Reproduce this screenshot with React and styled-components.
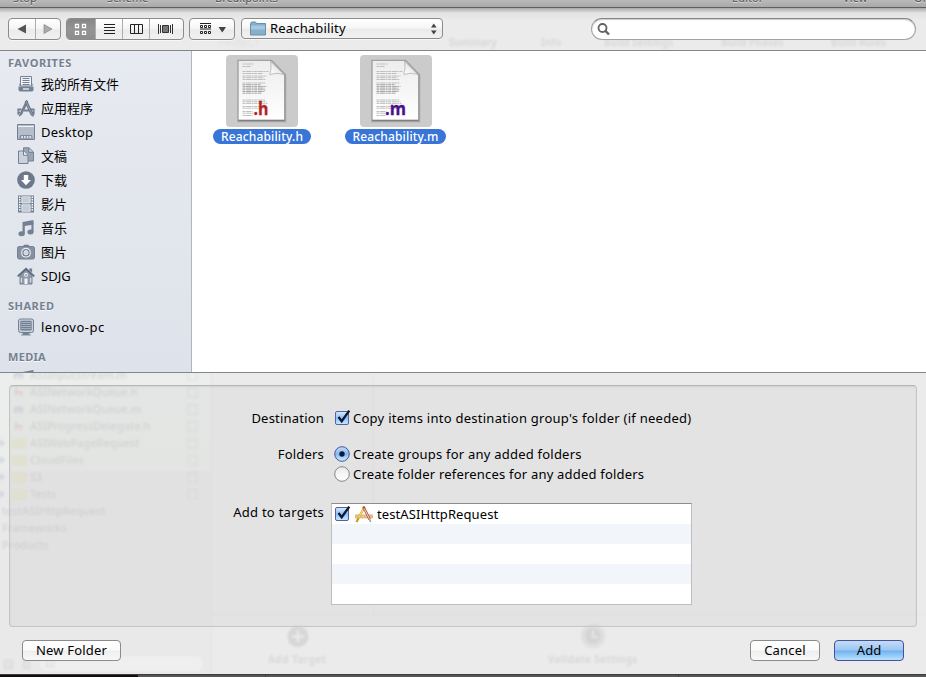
import React from "react";
import styled, { createGlobalStyle, css } from "styled-components";

const Global = createGlobalStyle`
  * { box-sizing: border-box; }
  body { margin: 0; overflow: hidden; }
`;

const Sheet = styled.div`
  position: relative;
  width: 926px;
  height: 677px;
  overflow: hidden;
  display: flex;
  flex-direction: column;
  background: #ebebeb;
  color: #000;
  font: 13px/20px "Noto Sans", "Noto Sans CJK SC", sans-serif;
  white-space: nowrap;
`;

const Text = styled.span`
  letter-spacing: ${(p) => p.$track || 0}px;
`;

/* ---------- Window behind the sheet ---------- */
const Behind = styled.div`
  position: absolute;
  inset: 0;
  overflow: hidden;
`;
const Tint = styled.div`
  position: absolute;
  left: 0;
  top: 373px;
  width: 211px;
  height: 301px;
  background: linear-gradient(#ebeeec 0, #ebedeb 96px, #e9e9e9 99px, #e9e9e9 100%);
`;
const Ghost = styled.div`
  position: absolute;
  left: ${(p) => p.$x}px;
  top: ${(p) => p.$y}px;
  font-size: ${(p) => p.$size || 11}px;
  font-weight: ${(p) => (p.$bold ? 700 : 500)};
  line-height: 16px;
  letter-spacing: ${(p) => p.$track || 0}px;
  color: rgba(60, 60, 60, ${(p) => p.$alpha || 0.13});
  filter: blur(0.9px);
`;
const GhostDrawing = styled.svg`
  position: absolute;
  inset: 0;
  filter: blur(1px);
`;

const WindowBar = styled.div`
  position: relative;
  flex: none;
  height: 8px;
  overflow: hidden;
  background: linear-gradient(#b9b9b9, #a9a9a9);
  border-bottom: 1px solid #5f5f5f;
`;
const BarLabel = styled.span`
  position: absolute;
  left: ${(p) => p.$x}px;
  top: -10px;
  font-size: 11px;
  line-height: 16px;
  letter-spacing: 0.1px;
  color: #555;
  text-shadow: 0 1px 0 #ddd;
`;

/* ---------- Toolbar ---------- */
const Toolbar = styled.div`
  position: relative;
  flex: none;
  display: flex;
  align-items: flex-start;
  height: 43px;
  padding: 10px 10px 0 8px;
  border-bottom: 1px solid #858585;
  background: linear-gradient(rgba(125, 125, 125, 0.6), rgba(215, 215, 215, 0.4) 5px, rgba(235, 235, 235, 0) 13px);
`;
const control = css`
  display: flex;
  height: 22px;
  border: 1px solid #8b8b8b;
  border-radius: 4px;
  background: linear-gradient(#fff, #f6f6f6 45%, #ebebeb 55%, #f1f1f1);
  box-shadow: 0 1px 0 rgba(255, 255, 255, 0.6);
`;
const Segments = styled.div`
  ${control}
  width: ${(p) => p.$w}px;
  margin-right: ${(p) => p.$gap}px;
  overflow: hidden;
`;
const Segment = styled.div`
  flex: ${(p) => (p.$w ? `0 0 ${p.$w}px` : "1")};
  display: flex;
  align-items: center;
  justify-content: center;
  background: ${(p) => (p.$on ? "linear-gradient(#858585, #949494 50%, #8d8d8d)" : "none")};
  & + & { border-left: 1px solid #adadad; }
`;
const FolderPopup = styled.div`
  ${control}
  width: 202px;
  height: 21px;
  align-items: center;
  padding: 0 5px 0 8px;
  gap: 4px;
  margin-right: 148px;
`;
const PopupName = styled(Text)`
  height: 20px;
  line-height: 18px;
`;
const Spacer = styled.div`
  flex: 1;
`;
const Search = styled.div`
  flex: 1;
  height: 22px;
  padding: 4px 5px;
  border: 1px solid #a3a3a3;
  border-top-color: #858585;
  border-radius: 11px;
  background: #fff;
  box-shadow: inset 0 1px 1px #ccc;
  svg { display: block; }
`;

/* ---------- Browser ---------- */
const Browser = styled.div`
  position: relative;
  flex: none;
  display: flex;
  height: 322px;
  border-bottom: 1px solid #858585;
  background: #fff;
`;
const Sidebar = styled.div`
  width: 192px;
  overflow: hidden;
  border-right: 1px solid #b3b5b8;
  background: linear-gradient(#e7eaf0, #dee2ea);
`;
const Heading = styled.div`
  height: 21px;
  margin-top: ${(p) => p.$gap || 0}px;
  padding: 2px 0 0 8px;
  font-size: 11px;
  font-weight: 700;
  letter-spacing: ${(p) => p.$track || 0}px;
  color: #76818f;
  text-shadow: 0 1px 0 #f5f7fa;
`;
const Place = styled.div`
  display: flex;
  align-items: center;
  gap: 6px;
  height: 24px;
  padding-left: 17px;
  svg { flex: none; }
`;
const Files = styled.div`
  display: flex;
  align-items: flex-start;
  gap: 34px;
  padding: 4px 0 0 21px;
`;
const File = styled.div`
  display: flex;
  flex-direction: column;
  align-items: center;
  gap: 2px;
`;
const Thumb = styled.div`
  width: 72px;
  height: 72px;
  border-radius: 4px;
  background: #cbcbcb;
`;
const FileName = styled.div`
  width: ${(p) => p.$w}px;
  height: 15px;
  border-radius: 8px;
  text-align: center;
  font-size: 12px;
  font-weight: 500;
  line-height: 15px;
  color: #fff;
  background: #3875d7;
  letter-spacing: ${(p) => p.$track}px;
`;

/* ---------- Options ---------- */
const Panel = styled.div`
  position: relative;
  flex: none;
  width: 908px;
  height: 242px;
  margin: 12px 0 0 9px;
  padding: 22px 0 0;
  border: 1px solid #c6c6c6;
  border-top-color: #b6b6b6;
  border-radius: 4px;
  background: rgba(190, 190, 190, 0.17);
  box-shadow: inset 0 1px 2px rgba(0, 0, 0, 0.08);
`;
const Field = styled.div`
  display: grid;
  grid-template-columns: 314px auto;
  margin-bottom: ${(p) => p.$after || 0}px;
`;
const FieldLabel = styled.div`
  text-align: right;
  line-height: ${(p) => p.$line || 20}px;
`;
const Choices = styled.div`
  padding-left: 10px;
`;
const Choice = styled.div`
  display: flex;
  align-items: center;
  height: 20px;
  gap: 1px;
  svg { flex: none; }
`;
const Targets = styled.div`
  width: 361px;
  height: 102px;
  margin-left: 7px;
  border: 1px solid #bebebe;
  border-top-color: #8e8e8e;
  background: #fff;
`;
const TargetRow = styled.div`
  display: flex;
  align-items: center;
  gap: 3px;
  height: 20px;
  padding-left: 2px;
  background: #fff;
  &:nth-child(even) { background: #f2f5fa; }
  svg { flex: none; }
`;
const TargetName = styled(Text)`
  margin-left: 1px;
`;

const Footer = styled.div`
  position: relative;
  flex: none;
  display: flex;
  align-items: flex-start;
  height: 47px;
  padding: 13px 22px 0;
`;
const Button = styled.button`
  width: ${(p) => p.$w}px;
  height: 21px;
  margin: 0 0 0 ${(p) => p.$gap || 0}px;
  padding: 0 0 1px;
  border: 1px solid ${(p) => (p.$primary ? "#4a4f9c" : "#8b8b8b")};
  border-radius: 4px;
  background: ${(p) =>
    p.$primary
      ? "linear-gradient(#c3dcf6, #9cc6f1 48%, #6fb2f0 52%, #b9e2fc)"
      : "linear-gradient(#fff, #fbfbfb 48%, #eeeeee 52%, #f8f8f8)"};
  font: inherit;
  line-height: 18px;
  letter-spacing: ${(p) => p.$track || 0}px;
  color: #000;
`;
const BottomEdge = styled.div`
  position: relative;
  flex: none;
  height: 3px;
  border-top: 1px solid #3c3c3c;
  background: linear-gradient(90deg, #100e0e 0 138px, #555 138px 265px, #444 265px 266px, #555 266px 678px, #444 678px 679px, #555 679px);
`;

/* ---------- Drawings ---------- */
const INK = "#748093";
const DARK = "#5f6b7c";
const placeDrawings = {
  all: (
    <>
      <path d="M3.500 1.500h11v9.500h-11z" fill="#f2f4f7" stroke={INK} />
      <path d="M5.500 3.500h7M5.500 5.500h7M5.500 7.500h7M5.500 9.500h7" stroke={INK} />
      <path d="M1.500 11.500h15v3.200q0 1.800-1.800 1.800H3.300q-1.800 0-1.800-1.800z" fill={INK} />
      <path d="M6 14h6" stroke="#f2f4f7" strokeWidth="1.300" />
      <path d="M2.500 10.500 3.500 8M15.500 10.500 14.500 8" stroke={INK} />
    </>
  ),
  apps: (
    <>
      <path d="M.5 10.500h4M13.500 10.500h4M.5 13.500h2.500M15 13.500h2.500M7 11.500h5" stroke={INK} strokeWidth="1.800" />
      <path d="M1.200 10v6M16.800 10v6" stroke={INK} strokeWidth="1.200" />
      <path d="M9.500 1.200 3 14.800l-.8 2.500 2.500-1.700L10.800 3z" fill={INK} stroke={DARK} strokeWidth=".6" />
      <path d="m8 3 1.700-1.600L16 15l.3 2.300-2.200-1.200z" fill="#8b96a5" stroke={DARK} strokeWidth=".8" />
    </>
  ),
  desktop: (
    <>
      <path d="M.5 1.500h17v15H.5z" fill="#b6bec9" stroke={INK} />
      <path d="M1 3.500h16" stroke="#eef1f5" />
      <path d="m2 15.500 1.500-3.500h11l1.500 3.500z" fill="#7e899a" />
      <path d="M4.200 14h1.800M7 14h1.600M9.800 14h1.600M12.400 14h1.800" stroke="#fff" strokeWidth="1.600" />
    </>
  ),
  docs: (
    <>
      <path d="M6.500 .8h5.500l4.500 4.200v9H6.500z" fill="#9aa5b3" stroke={INK} />
      <path d="M11.700 1v4.300H16" fill="#c4ccd6" stroke={INK} />
      <path d="M1.500 4h5.300l4.200 4v8.500H1.500z" fill="#ccd2db" stroke={INK} />
      <path d="M6.500 4v4.300H11" fill="#e9edf2" stroke={INK} />
    </>
  ),
  downloads: (
    <>
      <circle cx="9" cy="9" r="8.800" fill="#6d788a" />
      <path d="M6.800 4h4.400v5H14l-5 5.200L4 9h2.800z" fill="#fff" />
    </>
  ),
  movies: (
    <>
      <path d="M1 .5h16v17H1z" fill={INK} />
      <path d="M2.700 1.500v15M15.300 1.500v15" stroke="#fff" strokeWidth="1.500" strokeDasharray="1.500 1" />
      <path d="M4.800 1.800h8.400V8H4.800zM4.800 9.800h8.400v6.500H4.800z" fill="#c4ccd6" stroke="#eef1f5" strokeWidth=".8" />
    </>
  ),
  music: (
    <>
      <path d="M5.500 3 16.500 1v4.500L7.800 7v7.500H5.500z" fill={INK} />
      <path d="M14.400 3h2.100v10h-2.100z" fill={INK} />
      <ellipse cx="4.600" cy="14.700" rx="3.200" ry="2.500" fill={INK} />
      <ellipse cx="13.500" cy="13.100" rx="3.100" ry="2.500" fill={INK} />
    </>
  ),
  pictures: (
    <>
      <path d="M5.500 4 7 1.800h4.500L13 4z" fill={INK} />
      <rect x=".5" y="3.500" width="17" height="12.500" rx="1.800" fill="#8792a1" stroke={INK} />
      <circle cx="9" cy="9.700" r="4.900" fill="#eef1f5" />
      <circle cx="9" cy="9.700" r="3.800" fill={INK} />
      <circle cx="9" cy="9.700" r="2.100" fill="#c9d0d9" stroke="#eef1f5" />
    </>
  ),
  home: (
    <>
      <path d="M12.300 1.500h2.800v4l-2.800-2z" fill={INK} />
      <path d="M3 8.200 9 3l6 5.200V17H3z" fill="#909baa" stroke={INK} />
      <path d="m.7 9.300 8.300-7.500 8.300 7.500" fill="none" stroke={DARK} strokeWidth="1.800" />
      <path d="M4.300 11v4.500M13.700 11v4.500" stroke="#dde2e8" strokeWidth="1.200" />
      <path d="M7.500 11.500h3V17h-3z" fill="#f2f4f7" />
      <circle cx="9" cy="7.800" r="2" fill="#f2f4f7" />
      <circle cx="9" cy="7.800" r=".9" fill={INK} />
    </>
  ),
  computer: (
    <>
      <rect x="1.500" y="1" width="15" height="13.500" rx="2" fill="#cbd1da" stroke={INK} />
      <rect x="3.300" y="2.700" width="11.400" height="9.800" rx="1" fill={INK} />
      <path d="M4 4.500h10M4 6.500h10M4 8.500h10M4 10.500h10" stroke="#a4aebb" />
      <path d="M6.500 14.500h5l.8 2H5.700zM4 17h10" fill={INK} stroke={INK} strokeWidth=".8" />
    </>
  ),
};
const PlaceIcon = ({ kind }) => (
  <svg width="18" height="18" viewBox="0 0 18 18">{placeDrawings[kind]}</svg>
);

const textLines = [
  [6, 11], [8.5, 8], [13.5, 26], [15.5, 20], [18, 24], [19.700, 21], [21.500, 23],
  [25, 23], [26.700, 18], [28.400, 24], [30.100, 22], [31.800, 23], [33.500, 22], [35.200, 19],
  [42, 23], [43.700, 24], [45.400, 25], [48.500, 24], [50.200, 25], [53.500, 10], [55.200, 11], [57.500, 10],
];
const Document = ({ letter, color, id }) => (
  <svg width="72" height="72" viewBox="0 0 72 72">
    <defs>
      <linearGradient id={`page-${id}`} x2="0" y2="1">
        <stop stopColor="#ededed" />
        <stop offset="1" stopColor="#fff" />
      </linearGradient>
      <linearGradient id={`fold-${id}`} x1="0" y1="1" x2="1" y2="0">
        <stop stopColor="#fff" />
        <stop offset=".45" stopColor="#ececec" />
        <stop offset=".75" stopColor="#777" />
      </linearGradient>
    </defs>
    <path d="M12.500 6h33L59 20v46H12.500z" fill="none" stroke="#000" strokeOpacity=".2" strokeWidth="2.500" />
    <path d="M12.700 6h32.500L58 19.500v45.300H12.700z" fill={`url(#page-${id})`} />
    <path d="M12.500 65.300H58.500" stroke="#777" />
    {textLines.map(([y, w]) => (
      <path key={y} d={`M16.500 ${y + 3}h${w}`} stroke={y > 26 && y < 36 ? "#9c9c9c" : "#b8b8b8"} strokeWidth=".9" strokeDasharray="3 .6 5 .5 2 .6" />
    ))}
    <path d="M44.700 6q1 7.500-.8 13.500 7-2.500 14.100 0z" fill={`url(#fold-${id})`} stroke="#8a8a8a" strokeWidth=".5" />
    <text x={letter === "h" ? 27.500 : 25} y="60" fill={color} stroke={color} strokeWidth=".3" fontFamily="Open Sans, sans-serif" fontSize="18" fontWeight="700" textLength={letter === "h" ? 15 : 21} lengthAdjust="spacingAndGlyphs">
      .{letter}
    </text>
  </svg>
);

const Checkbox = ({ id }) => (
  <svg width="18" height="18" viewBox="0 0 18 18">
    <defs>
      <linearGradient id={id} x2="0" y2="1">
        <stop stopColor="#dcebfb" />
        <stop offset=".5" stopColor="#8fc0f2" />
        <stop offset="1" stopColor="#c7ecff" />
      </linearGradient>
    </defs>
    <rect x="1.500" y="2.500" width="13" height="13" rx="1.500" fill={`url(#${id})`} stroke="#56629f" />
    <path d="m4.500 8 3.200 4.200L15.300 1.600" fill="none" stroke="#0c1834" strokeWidth="2.300" />
  </svg>
);
const Radio = ({ on }) => (
  <svg width="18" height="18" viewBox="0 0 18 18">
    <defs>
      <linearGradient id={on ? "radio-on" : "radio-off"} x2="0" y2="1">
        <stop stopColor={on ? "#c8dcf7" : "#e9e9e9"} />
        <stop offset=".5" stopColor={on ? "#83b8f0" : "#f6f6f6"} />
        <stop offset="1" stopColor={on ? "#cdf1ff" : "#fff"} />
      </linearGradient>
    </defs>
    <circle cx="8" cy="9" r="7.300" fill={`url(#${on ? "radio-on" : "radio-off"})`} stroke={on ? "#4a569b" : "#868686"} />
    {on && <circle cx="8" cy="9" r="2.700" fill="#0c1834" />}
  </svg>
);
const AppIcon = () => (
  <svg width="18" height="18" viewBox="0 0 18 18">
    <path d="M.5 9.800h17v3.200H.5z" fill="#e8c08e" stroke="#d3a674" strokeWidth=".6" />
    <path d="M9.500 2 3.500 13l-2 4" fill="none" stroke="#c89c25" strokeWidth="2.200" />
    <path d="M9.500 2 3.500 13" stroke="#f6e05a" strokeWidth="1.300" />
    <path d="m8.300 1.500 6.400 13" stroke="#b6513c" strokeWidth="2.600" />
    <path d="m9.200 3.500 5.500 11" stroke="#eadfd8" strokeWidth="1" />
    <path d="m14.500 14.500 1.200 2.500" stroke="#999" strokeWidth="1.500" />
  </svg>
);

const favorites = [
  ["all", "我的所有文件", 0],
  ["apps", "应用程序", 0],
  ["desktop", "Desktop", 0.25],
  ["docs", "文稿", 0],
  ["downloads", "下载", 0],
  ["movies", "影片", 0],
  ["music", "音乐", 0],
  ["pictures", "图片", 0],
  ["home", "SDJG", 0],
];
const ghostFiles = [
  [30, "ASIInputStream.m", 0], [30, "ASINetworkQueue.h", 0], [30, "ASINetworkQueue.m", 0],
  [30, "ASIProgressDelegate.h", 0], [30, "ASIWebPageRequest", 0], [30, "CloudFiles", 0],
  [30, "S3", 0], [30, "Tests", 0], [2, "testASIHttpRequest", 0], [2, "Frameworks", 0], [2, "Products", 0],
];
const barLabels = [[13, "Stop"], [107, "Scheme"], [215, "Breakpoints"], [732, "Editor"], [843, "View"], [914, "Organizer"]];
const tabs = [[449, "Summary", 0.11], [541, "Info", 0.09], [604, "Build Settings", 0.1], [721, "Build Phases", 0.1], [831, "Build Rules", 0.1]];

const Backdrop = () => (
  <Behind>
    <Tint />
    {ghostFiles.map(([x, label, track], i) => (
      <Ghost key={label} $x={x} $y={367 + i * 17} $track={track}>{label}</Ghost>
    ))}
    {tabs.map(([x, label, alpha]) => (
      <Ghost key={label} $x={x} $y={34} $size={10} $bold $alpha={alpha}>{label}</Ghost>
    ))}
    <Ghost $x={219} $y={34} $size={10} $alpha={0.06}>PROJECT</Ghost>
    <Ghost $x={268} $y={651} $size={10} $bold $track={0.45} $alpha={0.1}>Add Target</Ghost>
    <Ghost $x={548} $y={651} $size={10} $bold $track={0.3} $alpha={0.1}>Validate Settings</Ghost>
    <GhostDrawing width="926" height="677">
      {[375, 392, 409, 426, 443, 460, 477, 494].map((y, i) => (
        <g key={y}>
          <rect x="188" y={y - 4} width="9" height="9" fill="none" stroke="#999" strokeOpacity=".17" />
          {i > 3 ? (
            <>
              <rect x="12" y={y - 5} width="15" height="11" fill="#e4e1b8" fillOpacity=".38" />
              <path d={`M0 ${y - 4}l5 4-5 4z`} fill="#8c98a8" fillOpacity=".25" />
            </>
          ) : (
            <path d={i % 2 ? `M16 ${y + 4}v-8M16 ${y}h5v4` : `M15 ${y + 4}v-5h7v5M18.500 ${y}v4`} stroke={i % 2 ? "#d88" : "#88b"} fill="none" strokeOpacity=".28" strokeWidth="1.800" />
          )}
        </g>
      ))}
      <path d="M211.500 373v301M211 614.500h715M373.500 374v240" stroke="#888" strokeOpacity=".07" />
      <circle cx="298" cy="636.500" r="10.500" fill="#888" fillOpacity=".2" />
      <path d="M292 636.500h12M298 630.500v12" stroke="#eaeaea" strokeWidth="2.500" />
      <circle cx="593" cy="636" r="12" fill="#888" fillOpacity=".12" />
      <circle cx="593" cy="636" r="8" fill="#888" fillOpacity=".12" />
      <path d="M593 630v7h5" stroke="#e6e6e6" strokeWidth="2" fill="none" />
      <rect x="40" y="656" width="163" height="15" rx="7" fill="#f5f5f5" fillOpacity=".5" />
      <path d="M4 660h9v9H4zM23 660h7v9h-7zM46 660h8v7h-8z" fill="#888" fillOpacity=".06" stroke="#888" strokeOpacity=".1" />
    </GhostDrawing>
  </Behind>
);

export default function App() {
  return (
    <Sheet>
      <Global />
      <Backdrop />
      <WindowBar>
        {barLabels.map(([x, label]) => <BarLabel key={label} $x={x}>{label}</BarLabel>)}
      </WindowBar>

      <Toolbar>
        <Segments $w={53} $gap={5}>
          <Segment $w={26}>
            <svg width="10" height="10"><path d="M9 .5v9L.5 5z" fill="#555" /></svg>
          </Segment>
          <Segment>
            <svg width="10" height="10"><path d="M1 .5v9L9 5z" fill="#aaa" stroke="#888" strokeWidth=".7" /></svg>
          </Segment>
        </Segments>
        <Segments $w={118} $gap={5}>
          <Segment $w={28} $on>
            <svg width="14" height="12">
              <path d="M1.500 1.500h3v3h-3zM8.500 1.500h3v3h-3zM1.500 8.500h3v3h-3zM8.500 8.500h3v3h-3z" fill="#777" stroke="#fff" strokeWidth="1.300" />
            </svg>
          </Segment>
          <Segment $w={27}>
            <svg width="13" height="11"><path d="M1 .5h11M1 3.500h11M1 6.500h11M1 9.500h11" stroke="#222" /></svg>
          </Segment>
          <Segment $w={27}>
            <svg width="13" height="11"><path d="M.5 .5h12v9H.5zM4.500 .5v9M8.500 .5v9" fill="none" stroke="#222" /></svg>
          </Segment>
          <Segment>
            <svg width="17" height="11">
              <path d="M.5 0v10M2.500 1v8M12.500 1v8M14.500 0v10" stroke="#333" />
              <path d="M4.500 1.500h6v7h-6z" fill="#777" stroke="#333" />
            </svg>
          </Segment>
        </Segments>
        <Segments $w={46} $gap={6}>
          <Segment>
            <svg width="31" height="12">
              <path d="M3 .5h11M3 6h11" stroke="#222" />
              <path d="M3.500 2.500h2v2h-2zM7.500 2.500h2v2h-2zM11.500 2.500h2v2h-2zM3.500 8.500h2v2h-2zM7.500 8.500h2v2h-2zM11.500 8.500h2v2h-2z" fill="#fff" stroke="#222" />
              <path d="M21.500 4H29l-3.700 5.500z" fill="#444" />
            </svg>
          </Segment>
        </Segments>
        <FolderPopup>
          <svg width="16" height="15">
            <path d="M.5 14V2.500l1-1.500h4l1 1.500h9V14z" fill="#86afca" stroke="#6b90aa" />
            <path d="M1 4.500h14v4H1z" fill="#a6c9df" />
          </svg>
          <PopupName $track={0.17}>Reachability</PopupName>
          <Spacer />
          <svg width="7" height="12"><path d="M1 4.500h5.600L3.800.5zM1 7.500h5.600l-2.800 4z" fill="#444" /></svg>
        </FolderPopup>
        <Search>
          <svg width="14" height="14">
            <circle cx="5.500" cy="5" r="4" fill="none" stroke="#636363" strokeWidth="1.800" />
            <path d="m8 7.500 4 4" stroke="#636363" strokeWidth="2.400" />
          </svg>
        </Search>
      </Toolbar>

      <Browser>
        <Sidebar>
          <Heading $track={0.55}>FAVORITES</Heading>
          {favorites.map(([kind, name, track]) => (
            <Place key={kind}><PlaceIcon kind={kind} /><Text $track={track}>{name}</Text></Place>
          ))}
          <Heading $gap={6} $track={0.5}>SHARED</Heading>
          <Place><PlaceIcon kind="computer" /><Text $track={0.5}>lenovo-pc</Text></Place>
          <Heading $gap={6} $track={0.3}>MEDIA</Heading>
          <Place><PlaceIcon kind="music" /></Place>
        </Sidebar>
        <Files>
          <File>
            <Thumb><Document letter="h" color="#b51f24" id="h" /></Thumb>
            <FileName $w={98} $track={0.15}>Reachability.h</FileName>
          </File>
          <File>
            <Thumb><Document letter="m" color="#4b0f8f" id="m" /></Thumb>
            <FileName $w={101} $track={0.15}>Reachability.m</FileName>
          </File>
        </Files>
      </Browser>

      <Panel>
        <Field $after={16}>
          <FieldLabel><Text $track={0.2}>Destination</Text></FieldLabel>
          <Choices>
            <Choice><Checkbox id="copy" /><Text $track={0.26}>Copy items into destination group's folder (if needed)</Text></Choice>
          </Choices>
        </Field>
        <Field $after={19}>
          <FieldLabel><Text $track={0.2}>Folders</Text></FieldLabel>
          <Choices>
            <Choice><Radio on /><Text $track={0.22}>Create groups for any added folders</Text></Choice>
            <Choice><Radio /><Text $track={0.2}>Create folder references for any added folders</Text></Choice>
          </Choices>
        </Field>
        <Field>
          <FieldLabel $line={18}><Text $track={0.27}>Add to targets</Text></FieldLabel>
          <Targets>
            <TargetRow><Checkbox id="target" /><AppIcon /><TargetName $track={0.1}>testASIHttpRequest</TargetName></TargetRow>
            <TargetRow /><TargetRow /><TargetRow /><TargetRow />
          </Targets>
        </Field>
      </Panel>

      <Footer>
        <Button $w={99} $track={0.2}>New Folder</Button>
        <Spacer />
        <Button $w={70} $track={0.2}>Cancel</Button>
        <Button $w={70} $gap={14} $primary>Add</Button>
      </Footer>
      <BottomEdge />
    </Sheet>
  );
}
